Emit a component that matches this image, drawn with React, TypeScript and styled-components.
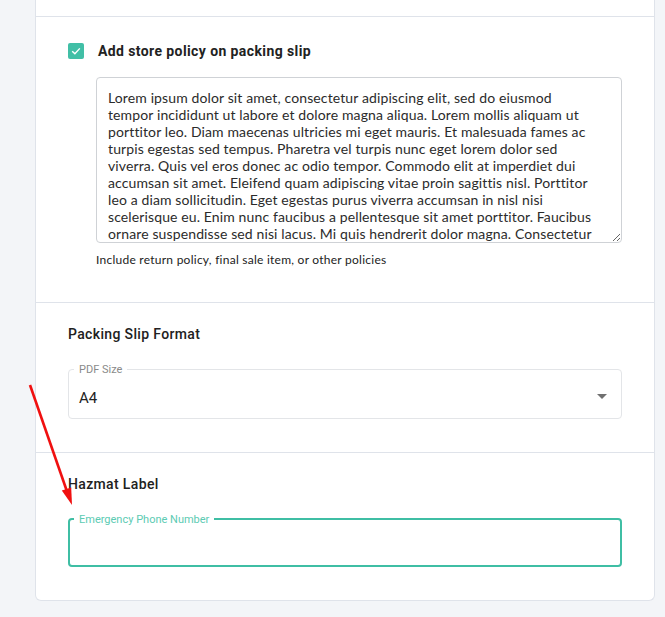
import React from 'react';
import styled, { createGlobalStyle } from 'styled-components';

const GlobalStyle = createGlobalStyle`
  html, body {
    margin: 0;
    padding: 0;
    background: #f3f5f8;
  }
  body {
    font-family: Roboto, "Liberation Sans", sans-serif;
    color: #212121;
  }
`;

const Page = styled.div`
  position: relative;
  width: 665px;
  height: 617px;
  overflow: hidden;
`;

const Card = styled.div`
  margin-left: 35px;
  width: 618px;
  background: #fff;
  border: 1px solid #dfe3ea;
  border-top: none;
  border-radius: 0 0 6px 6px;
`;

const PrevSection = styled.div`
  height: 16px;
`;

const Section = styled.section<{ $top?: number; $bottom?: number }>`
  border-top: 1px solid #dfe3ea;
  padding: ${(p) => p.$top ?? 21}px 32px ${(p) => p.$bottom ?? 33}px;
  display: flex;
  flex-direction: column;
`;

const CheckRow = styled.label`
  display: flex;
  align-items: center;
  gap: 14px;
  height: 20px;
`;

const CheckBox = styled.span`
  width: 16px;
  height: 16px;
  border-radius: 2px;
  background: #41bfa6;
  display: flex;
  align-items: center;
  justify-content: center;
`;

const CheckLabel = styled.span`
  font-weight: 700;
  font-size: 14px;
  letter-spacing: 0.4px;
  color: #222;
`;

const PolicyBlock = styled.div`
  margin: 16px 0 0 28px;
  display: flex;
  flex-direction: column;
`;

const PolicyText = styled.textarea`
  box-sizing: border-box;
  width: 526px;
  height: 166px;
  padding: 11px 11px;
  border: 1px solid #cfd2d6;
  border-radius: 4px;
  font-family: Lato, "Open Sans", sans-serif;
  font-size: 14px;
  line-height: 17px;
  letter-spacing: 0.12px;
  color: #2b2b2b;
  white-space: pre-wrap;
  overflow: hidden;
  resize: both;
  outline: none;
`;

const Helper = styled.div`
  margin-top: 9px;
  font-family: Lato, "Open Sans", sans-serif;
  font-size: 12px;
  line-height: 16px;
  letter-spacing: 0.25px;
  color: #222;
`;

const Heading = styled.h3`
  margin: 0;
  font-size: 14px;
  font-weight: 500;
  line-height: 20px;
  letter-spacing: 0.35px;
  color: #212121;
`;

const Field = styled.div<{ $active?: boolean }>`
  position: relative;
  box-sizing: border-box;
  margin-top: ${(p) => (p.$active ? 24 : 25)}px;
  height: ${(p) => (p.$active ? 49 : 50)}px;
  border: ${(p) => (p.$active ? '2px solid #3fbea4' : '1px solid #e3e5e8')};
  border-radius: 4px;
  display: flex;
  align-items: flex-start;
  justify-content: space-between;
  padding: 18px 14px 0 10px;
`;

const FieldLabel = styled.span<{ $active?: boolean }>`
  position: absolute;
  top: -7px;
  left: ${(p) => (p.$active ? 4 : 5)}px;
  padding: 0 5px;
  background: #fff;
  font-size: 11px;
  line-height: 13px;
  color: ${(p) => (p.$active ? '#5ccbb3' : '#8a8a8a')};
`;

const FieldValue = styled.span`
  font-size: 15px;
  line-height: 20px;
  color: #222;
`;

const Caret = styled.span`
  margin-top: 6px;
  width: 0;
  height: 0;
  border-left: 5px solid transparent;
  border-right: 5px solid transparent;
  border-top: 5px solid #707070;
`;

const Annotation = styled.svg`
  position: absolute;
  left: 0;
  top: 0;
  pointer-events: none;
`;

const policy = [
  'Lorem ipsum dolor sit amet, consectetur adipiscing elit, sed do eiusmod',
  'tempor incididunt ut labore et dolore magna aliqua. Lorem mollis aliquam ut',
  'porttitor leo. Diam maecenas ultricies mi eget mauris. Et malesuada fames ac',
  'turpis egestas sed tempus. Pharetra vel turpis nunc eget lorem dolor sed',
  'viverra. Quis vel eros donec ac odio tempor. Commodo elit at imperdiet dui',
  'accumsan sit amet. Eleifend quam adipiscing vitae proin sagittis nisl. Porttitor',
  'leo a diam sollicitudin. Eget egestas purus viverra accumsan in nisl nisi',
  'scelerisque eu. Enim nunc faucibus a pellentesque sit amet porttitor. Faucibus',
  'ornare suspendisse sed nisi lacus. Mi quis hendrerit dolor magna. Consectetur',
  'adipiscing elit duis tristique sollicitudin nibh sit amet commodo.',
].join('\n');

export default function App() {
  return (
    <Page>
      <GlobalStyle />
      <Card>
        <PrevSection />

        <Section $top={24} $bottom={34}>
          <CheckRow>
            <CheckBox>
              <svg width="12" height="12" viewBox="0 0 12 12">
                <path d="M2.2 6.2 L4.9 8.8 L9.8 3.4" fill="none" stroke="#fff" strokeWidth="1.4" />
              </svg>
            </CheckBox>
            <CheckLabel>Add store policy on packing slip</CheckLabel>
          </CheckRow>
          <PolicyBlock>
            <PolicyText defaultValue={policy} spellCheck={false} />
            <Helper>Include return policy, final sale item, or other policies</Helper>
          </PolicyBlock>
        </Section>

        <Section>
          <Heading>Packing Slip Format</Heading>
          <Field>
            <FieldLabel>PDF Size</FieldLabel>
            <FieldValue>A4</FieldValue>
            <Caret />
          </Field>
        </Section>

        <Section>
          <Heading>Hazmat Label</Heading>
          <Field $active>
            <FieldLabel $active>Emergency Phone Number</FieldLabel>
          </Field>
        </Section>
      </Card>

      <Annotation width="665" height="617" viewBox="0 0 665 617">
        <line x1="30" y1="385" x2="66.5" y2="490" stroke="#f01010" strokeWidth="2.6" />
        <polygon points="72,505 61.8,490.6 71.2,487.6" fill="#f01010" />
      </Annotation>
    </Page>
  );
}
